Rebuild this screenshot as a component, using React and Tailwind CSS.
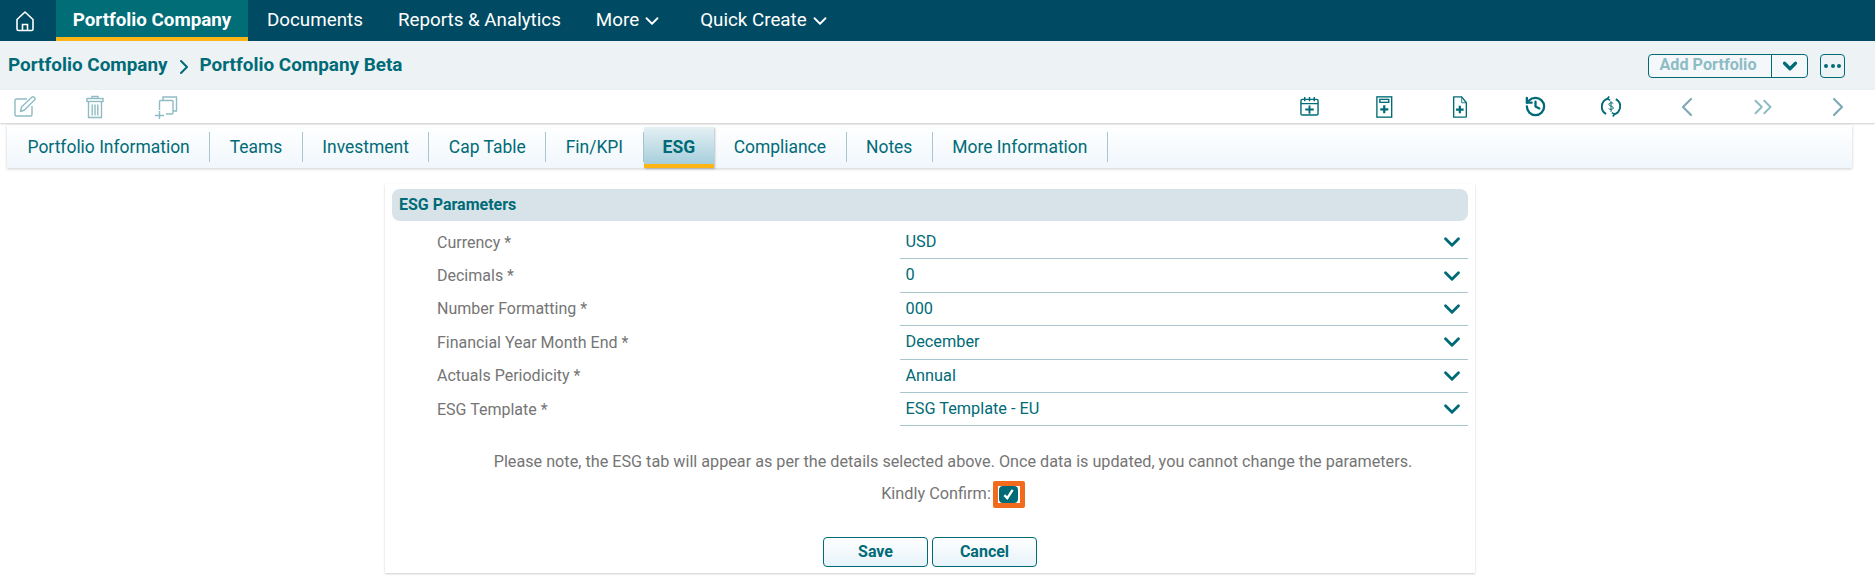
import { ChevronDown, ChevronLeft, ChevronRight, ChevronsRight, History } from 'lucide-react';

const navItems = ['Documents', 'Reports & Analytics'];
const tabs = ['Portfolio Information', 'Teams', 'Investment', 'Cap Table', 'Fin/KPI', 'ESG', 'Compliance', 'Notes', 'More Information'];
const fields = [
  { label: 'Currency *', value: 'USD' },
  { label: 'Decimals *', value: '0' },
  { label: 'Number Formatting *', value: '000' },
  { label: 'Financial Year Month End *', value: 'December' },
  { label: 'Actuals Periodicity *', value: 'Annual' },
  { label: 'ESG Template *', value: 'ESG Template - EU' },
];

const HomeIcon = () => (
  <svg width="22" height="24" viewBox="0 0 22 24" fill="none" stroke="white" strokeWidth="1.6">
    <path d="M3 10.5 11 3l8 7.5V20a1.5 1.5 0 0 1-1.5 1.5h-13A1.5 1.5 0 0 1 3 20z" strokeLinejoin="round" />
    <path d="M8.5 21.5V15.5h5v6" />
  </svg>
);

const EditIcon = () => (
  <svg width="24" height="24" viewBox="0 0 24 24" fill="none" stroke="#8fbcc4" strokeWidth="1.4">
    <path d="M14 4H3.5A1.5 1.5 0 0 0 2 5.5v14A1.5 1.5 0 0 0 3.5 21h14a1.5 1.5 0 0 0 1.5-1.5V11" />
    <path d="M7.5 16.5 8.5 12 18.5 2.5a1.6 1.6 0 0 1 3 2.5L11.5 15z" strokeLinejoin="round" />
  </svg>
);

const TrashIcon = () => (
  <svg width="18" height="24" viewBox="0 0 18 24" fill="none" stroke="#8fbcc4" strokeWidth="1.4">
    <path d="M6 3.5V1.5h6v2" />
    <rect x="1" y="3.5" width="16" height="3" />
    <path d="M2.5 7v15.5h13V7M6.2 9.5v11M9 9.5v11M11.8 9.5v11" />
  </svg>
);

const CopyIcon = () => (
  <svg width="24" height="24" viewBox="0 0 24 24" fill="none" stroke="#8fbcc4" strokeWidth="1.4">
    <path d="M9 5V2h13.5v14H19" />
    <path d="M5.5 15V6.5a1 1 0 0 1 1-1H18a1 1 0 0 1 1 1V18a1 1 0 0 1-1 1h-6" />
    <path d="M1 20.5h9M5.5 16v8" />
  </svg>
);

const CalendarPlusIcon = () => (
  <svg width="19" height="19" viewBox="0 0 20 20" fill="none" stroke="#006b77" strokeWidth="1.5">
    <rect x="1" y="2.5" width="18" height="16.5" rx="1.5" />
    <path d="M1 7h18M5 0v4.5M10 0v4.5M15 0v4.5" />
    <path d="M10 9v8.5M5.5 13.2h9" strokeWidth="2" />
  </svg>
);

const CalcPlusIcon = () => (
  <svg width="17" height="22" viewBox="0 0 20 26" fill="none" stroke="#006b77" strokeWidth="1.6">
    <rect x="1" y="1" width="17.5" height="24" />
    <rect x="4.5" y="4" width="10.5" height="3.5" />
    <path d="M9.7 11v9.5M5 15.7h9.5" strokeWidth="2.6" />
  </svg>
);

const FilePlusIcon = () => (
  <svg width="16" height="22" viewBox="0 0 18 26" fill="none" stroke="#006b77" strokeWidth="1.6">
    <path d="M1.5 1h9.5l5.5 7v16a1 1 0 0 1-1 1h-14z" strokeLinejoin="round" />
    <path d="M11 1v7h5.5" strokeWidth="1" />
    <path d="M8.8 11.5v9M4.3 16h9" strokeWidth="2.6" />
  </svg>
);

const DollarCycleIcon = () => (
  <svg width="20" height="21" viewBox="0 0 22 24" fill="none" stroke="#006b77" strokeWidth="2.2">
    <path d="M5.5 20.5A9.5 9.5 0 0 1 7.5 3" />
    <path d="M16.5 3.5A9.5 9.5 0 0 1 14.5 21" />
    <path d="M9 0.5l-2 2.5 3 2M13 23.5l2-2.5-3-2" strokeWidth="1.8" />
    <path d="M13.7 8.7c-.6-1.2-4.900-1.500-5.200.7-.3 2.500 5.400 1.700 5.200 4.400-.2 2-4.600 2-5.400.6M11 5.800v12.400" strokeWidth="1.1" />
  </svg>
);

export default function App() {
  return (
    <div className="w-[1875px] h-[584px] overflow-hidden bg-white font-['Roboto',sans-serif]">
      {/* top nav */}
      <div className="flex h-[41px] bg-[#004b63] text-white text-[18.8px]">
        <div className="flex w-[56px] items-center justify-center pr-[7px]">
          <HomeIcon />
        </div>
        <div className="flex w-[192px] items-center justify-center border-b-[4px] border-[#fdb515] bg-[#006d77] font-bold pt-[3px]">
          Portfolio Company
        </div>
        {navItems.map((item) => (
          <div key={item} className="flex items-center pl-[19px] pr-[16px]">{item}</div>
        ))}
        <div className="flex items-center gap-[2px] pl-[19px]">
          More <ChevronDown size={22} strokeWidth={2} />
        </div>
        <div className="flex items-center gap-[2px] pl-[37px]">
          Quick Create <ChevronDown size={22} strokeWidth={2} />
        </div>
      </div>

      {/* breadcrumb */}
      <div className="flex h-[49px] items-center justify-between bg-[#edf2f5] pl-[8px] pr-[30px]">
        <div className="flex items-center text-[18.9px] font-bold text-[#006b77]">
          <span>Portfolio Company</span>
          <ChevronRight size={24} strokeWidth={2} className="mx-[4px] mt-[3px]" />
          <span>Portfolio Company Beta</span>
        </div>
        <div className="flex items-center gap-[12px]">
          <div className="flex h-[24px] w-[160px] rounded-[4px] border border-[#006b77] bg-[#f5f8fa]">
            <div className="flex w-[123px] items-center justify-center border-r border-[#006b77] pr-[4px] text-[16.2px] font-bold text-[#8dbcc4]">
              Add Portfolio
            </div>
            <div className="flex flex-1 items-center justify-center">
              <ChevronDown size={22} strokeWidth={3.5} className="text-[#006b77]" />
            </div>
          </div>
          <div className="flex h-[24px] w-[25px] items-center justify-center gap-[2.5px] rounded-[4px] border border-[#006b77]">
            <span className="h-[4px] w-[4px] rounded-full bg-[#006b77]" />
            <span className="h-[4px] w-[4px] rounded-full bg-[#006b77]" />
            <span className="h-[4px] w-[4px] rounded-full bg-[#006b77]" />
          </div>
        </div>
      </div>

      {/* toolbar */}
      <div className="flex h-[33px] items-center justify-between shadow-[0_1px_2px_rgba(0,0,0,0.2)]">
        <div className="flex items-center">
          <div className="flex w-[49px] justify-center"><EditIcon /></div>
          <div className="ml-[10.5px] flex w-[71px] justify-center"><TrashIcon /></div>
          <div className="flex w-[71px] justify-center"><CopyIcon /></div>
        </div>
        <div className="-mr-[1px] flex items-center">
          <div className="flex w-[75.6px] justify-center"><CalendarPlusIcon /></div>
          <div className="flex w-[75.6px] justify-center"><CalcPlusIcon /></div>
          <div className="flex w-[75.6px] justify-center"><FilePlusIcon /></div>
          <div className="flex w-[75.6px] justify-center"><History size={23} strokeWidth={2.4} className="text-[#006b77]" /></div>
          <div className="flex w-[75.6px] justify-center"><DollarCycleIcon /></div>
          <div className="flex w-[75.6px] justify-center"><ChevronLeft size={32} strokeWidth={1.6} className="text-[#7fa9b5]" /></div>
          <div className="flex w-[75.6px] justify-center"><ChevronsRight size={30} strokeWidth={1.6} className="text-[#8dbcc4]" /></div>
          <div className="flex w-[75.6px] justify-center"><ChevronRight size={32} strokeWidth={1.6} className="text-[#7fa9b5]" /></div>
        </div>
      </div>

      {/* tabs */}
      <div className="mx-[7px] mt-[2px] flex h-[43px] w-[1845px] items-end bg-gradient-to-b from-white to-[#f0f7fc] pl-[1px] shadow-[0_1px_3px_rgba(0,0,0,0.2)]">
        {tabs.map((tab) =>
          tab === 'ESG' ? (
            <div key={tab} className="flex h-[41px] items-start justify-center border-b-[4px] border-[#fdb515] bg-gradient-to-b from-[#e4f0f4] to-[#a6cfdc] px-[19px] pt-[7px] text-[17.5px] font-bold text-[#006b77] shadow-[1px_1px_2px_rgba(0,0,0,0.25)]">
              {tab}
            </div>
          ) : (
            <div key={tab} className="mb-[6px] flex h-[30px] items-center border-r border-[#a9c6cf] px-[19.5px] text-[17.45px] text-[#006b77]">
              {tab}
            </div>
          ),
        )}
      </div>

      {/* ESG parameters card */}
      <div className="ml-[385px] mt-[16px] h-[389px] w-[1090px] px-[7px] pt-[5px] shadow-[0_1px_2px_rgba(0,0,0,0.2)]">
        <div className="flex h-[32px] items-center rounded-lg bg-[#d7e3e8] pl-[7px] text-[16px] font-bold text-[#006b77]">
          ESG Parameters
        </div>
        <div className="mt-[5px]">
          {fields.map((field) => (
            <div key={field.label} className="flex h-[33.4px] items-center">
              <div className="w-[507.5px] pl-[45px] text-[16px] text-[#757575]">{field.label}</div>
              <div className="flex h-full flex-1 items-center justify-between border-b border-[#a9c6cf] pl-[6px] pr-[3px] text-[16.3px] text-[#006b77]">
                <span>{field.value}</span>
                <ChevronDown size={26} strokeWidth={2.6} />
              </div>
            </div>
          ))}
        </div>
        <p className="mt-[24px] pl-[46px] text-center text-[16.2px] text-[#757575]">
          Please note, the ESG tab will appear as per the details selected above. Once data is updated, you cannot change the parameters.
        </p>
        <div className="mt-[6px] flex items-center justify-center pl-[46px] text-[16.3px] text-[#757575]">
          <span className="mr-[2px]">Kindly Confirm:</span>
          <span className="flex h-[27px] w-[32px] items-center justify-center rounded-[2px] border-[5px] border-[#f26a1b] bg-white">
            <span className="flex h-[17px] w-[19px] items-center justify-center rounded-[4px] bg-[#006b77]">
              <svg width="13" height="13" viewBox="0 0 11 11" fill="none" stroke="white" strokeWidth="2">
                <path d="M2 6l2.5 2.5L9 1.5" />
              </svg>
            </span>
          </span>
        </div>
        <div className="mt-[29px] flex justify-center gap-[4px]">
          {['Save', 'Cancel'].map((label) => (
            <button key={label} className="h-[30px] w-[105px] rounded-[4px] border border-[#006b77] bg-gradient-to-b from-white to-[#e6f2f9] text-[16px] font-bold text-[#006b77]">
              {label}
            </button>
          ))}
        </div>
      </div>
    </div>
  );
}
